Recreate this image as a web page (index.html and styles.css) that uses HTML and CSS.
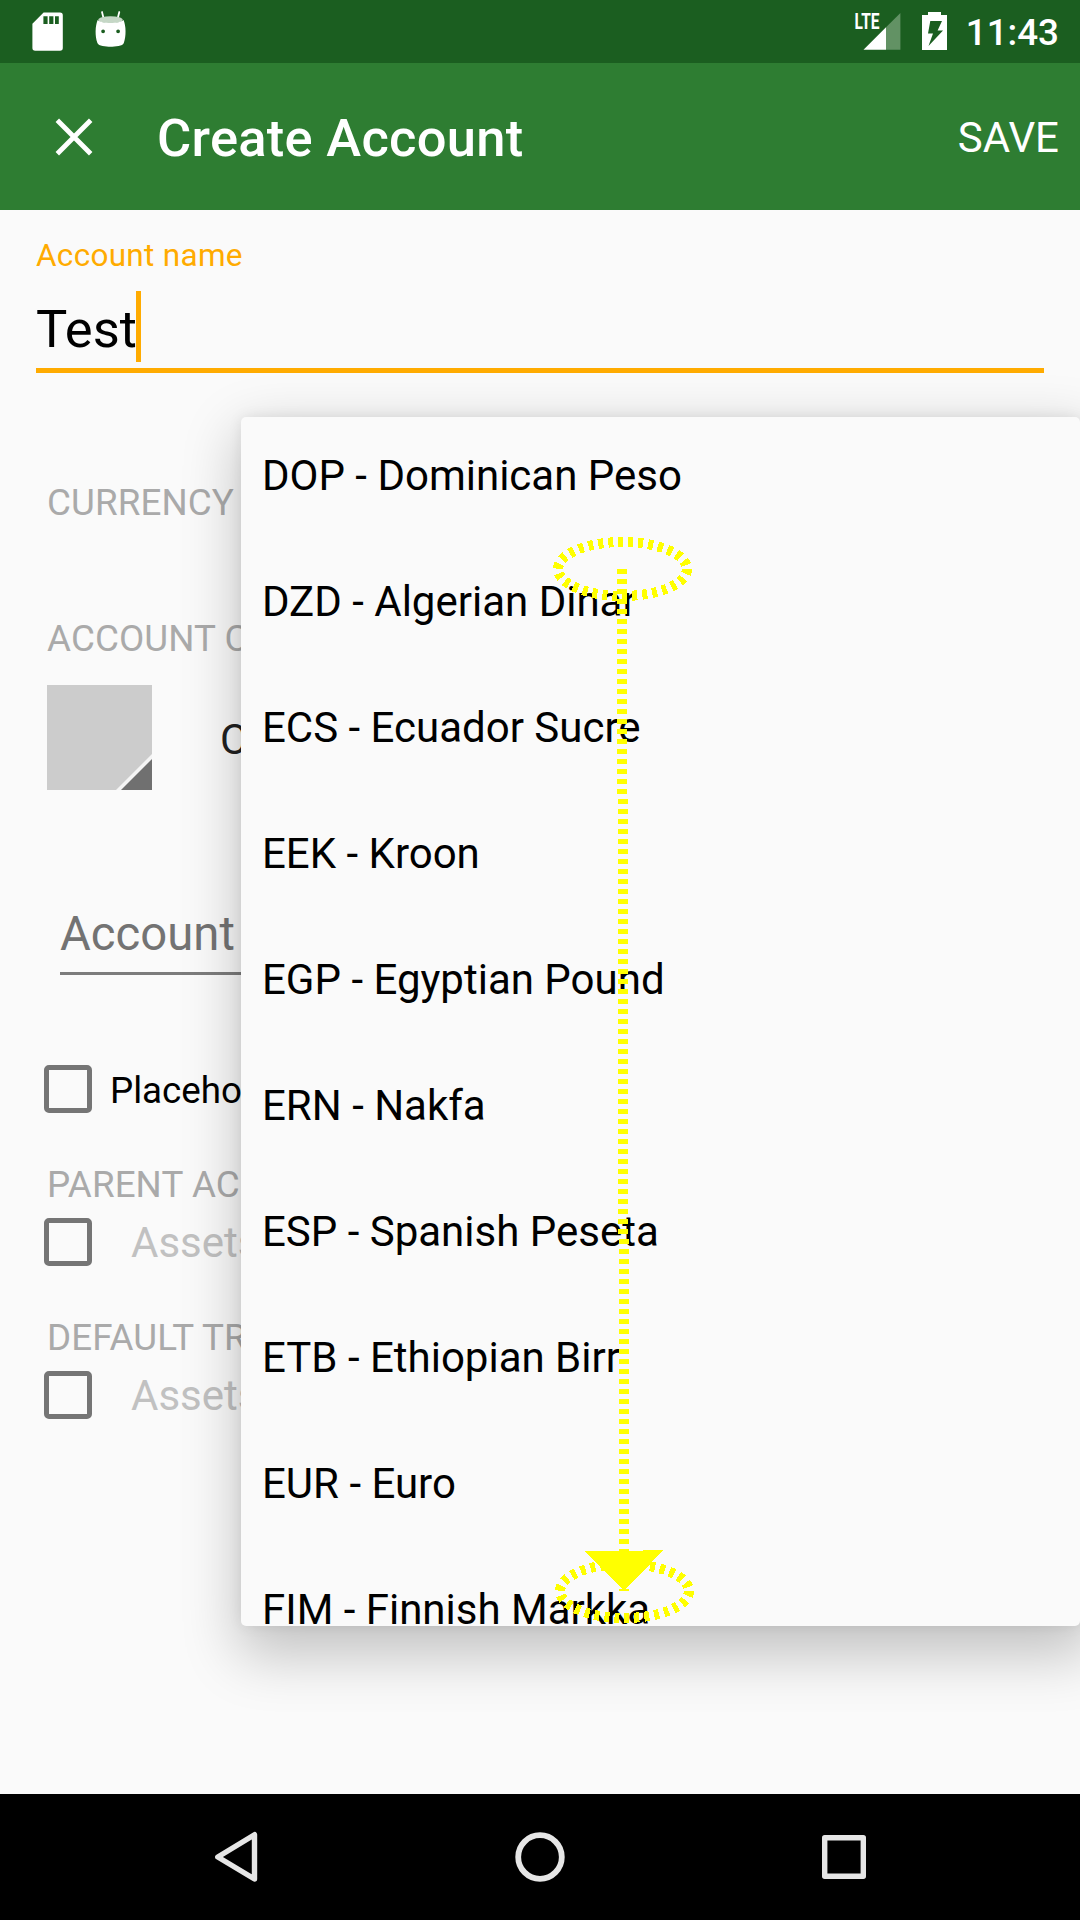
FILE: index.html
```html
<!DOCTYPE html>
<html lang="en">
<head>
<meta charset="utf-8">
<title>Create Account</title>
<link rel="stylesheet" href="styles.css">
</head>
<body>
<div class="screen">
  <header class="status-bar">
    <svg class="status-icons" width="140" height="63" viewBox="0 0 140 63">
      <path fill="#fff" fill-rule="evenodd" d="M43.6 12.4H60a2.8 2.8 0 0 1 2.8 2.8V48a2.8 2.8 0 0 1-2.8 2.8H35.2a2.8 2.8 0 0 1-2.8-2.8V23.8zM43.4 16.3V24h4.2v-7.7zM49.2 16.3V24h4.2v-7.7zM55 16.3V24h3.8v-7.7z"/>
      <path stroke="#fff" stroke-width="1.8" stroke-linecap="round" d="M102 12l1.6 6.5M119.300 12l-1.600 6.500"/>
      <ellipse cx="110.500" cy="19.800" rx="12.200" ry="3.600" fill="#c5d7c6"/>
      <path fill="#fff" fill-rule="evenodd" d="M97.600 20C102 24 119 24 123.600 20C126 26 126.400 36 123.800 43C123 46.200 115 46.700 110.500 46.700S98.400 46.200 97.400 43C94.800 36 95.200 26 97.600 20zM101.200 31.300a1.900 1.900 0 1 0 3.800 0a1.900 1.900 0 1 0-3.800 0zM116.200 31.300a1.900 1.900 0 1 0 3.800 0a1.900 1.900 0 1 0-3.800 0z"/>
    </svg>
    <div class="status-right">
      <svg width="112" height="63" viewBox="850 0 112 63">
        <path fill="#629264" d="M886 27.300L900.400 13V49.700H886z"/>
        <path fill="#fff" d="M863.500 49.700L886 27.300V49.700z"/>
        <text class="lte" x="854.500" y="29" textLength="25" lengthAdjust="spacingAndGlyphs">LTE</text>
        <path fill="#fff" fill-rule="evenodd" d="M922 15h6v-3h13v3h6v35h-25zM930.300 21L928 33.500h5L928.500 46L943 30.500h-5.400L942 21z"/>
      </svg>
      <span class="clock">11:43</span>
    </div>
  </header>

  <div class="toolbar">
    <svg class="close" width="38" height="38" viewBox="0 0 38 38"><path stroke="#fff" stroke-width="4.900" d="M2.300 2.300L35.700 35.700M35.700 2.300L2.300 35.700"/></svg>
    <h1 class="title">Create Account</h1>
    <span class="save">SAVE</span>
  </div>

  <main class="form">
    <div class="name-label">Account name</div>
    <div class="name-input"><span class="name-value">Test</span><span class="caret"></span></div>
    <div class="name-line"></div>

    <div class="fields">
      <div class="section currency">CURRENCY</div>
      <div class="section color">ACCOUNT COLOR</div>
      <div class="swatch-row">
        <svg width="105" height="105" viewBox="0 0 105 105">
          <path fill="#ccc" d="M0 0H105V105H0z"/>
          <path fill="#f5f5f5" d="M105 69V105H69z"/>
          <path fill="#707070" d="M105 74V105H74z"/>
        </svg>
        <span>Color</span>
      </div>
      <div class="description">Account description</div>
      <div class="check-row placeholder"><i class="box"></i><span>Placeholder account</span></div>
      <div class="section parent">PARENT ACCOUNT</div>
      <div class="check-row account"><i class="box"></i><span>Assets</span></div>
      <div class="section parent">DEFAULT TRANSFER ACCOUNT</div>
      <div class="check-row account"><i class="box"></i><span>Assets</span></div>
    </div>
  </main>

  <nav class="nav-bar">
    <svg width="1080" height="126" viewBox="0 1794 1080 126" fill="none" stroke="#e6e6e6" stroke-width="5.400" stroke-linejoin="round">
      <path d="M217.800 1857L254.500 1834.700V1879z"/>
      <circle cx="540" cy="1857" r="21.800" stroke-width="5.800"/>
      <rect x="824.700" y="1837.700" width="38.600" height="38.600"/>
    </svg>
  </nav>

  <div class="dropdown">
    <ul class="options">
      <li>DOP - Dominican Peso</li>
      <li>DZD - Algerian Dinar</li>
      <li>ECS - Ecuador Sucre</li>
      <li>EEK - Kroon</li>
      <li>EGP - Egyptian Pound</li>
      <li>ERN - Nakfa</li>
      <li>ESP - Spanish Peseta</li>
      <li>ETB - Ethiopian Birr</li>
      <li>EUR - Euro</li>
      <li>FIM - Finnish Markka</li>
    </ul>
  </div>

  <svg class="gesture" width="150" height="1100" viewBox="550 530 150 1100" fill="none" stroke="#ff0" stroke-width="10" stroke-dasharray="5" shape-rendering="crispEdges">
    <ellipse cx="622.500" cy="569" rx="64.500" ry="27"/>
    <path d="M622 569L624.300 1590"/>
    <ellipse cx="624.500" cy="1591" rx="64.500" ry="27"/>
    <path fill="#ff0" stroke="none" d="M584 1551H643V1550H663.500L626 1589H629V1591H619V1589H622z"/>
  </svg>
</div>
</body>
</html>
```
FILE: styles.css
```css
* { box-sizing: border-box; }

body {
  margin: 0;
  background: #fafafa;
  color: #000;
  font-family: Roboto, sans-serif;
}

.screen {
  position: relative;
  display: flex;
  flex-direction: column;
  width: 1080px;
  height: 1920px;
  overflow: hidden;
}

svg { display: block; flex: none; }

.status-bar {
  display: flex;
  justify-content: space-between;
  height: 63px;
  background: #1b5e20;
  color: #fff;
}

.status-right { display: flex; padding-right: 21px; gap: 4px; }
.lte { fill: #fff; font-size: 22px; font-weight: 700; }
.clock { font-size: 36.75px; font-weight: 500; line-height: 66px; }

.toolbar {
  display: flex;
  align-items: center;
  height: 147px;
  padding: 0 21px 0 55px;
  background: #2e7d32;
  color: #fff;
}

.title {
  flex: 1;
  margin: 0 0 0 64px;
  padding-top: 3px;
  font-size: 52.5px;
  font-weight: 500;
  letter-spacing: .27px;
}

.save { padding-top: 2px; font-size: 42px; }

.form { flex: 1; padding: 26px 36px 0; white-space: nowrap; }
.name-label { color: #ffab00; font-size: 31.5px; line-height: 40px; letter-spacing: .3px; }
.name-input { display: flex; height: 71px; margin-top: 15px; }
.name-value { width: 100px; font-size: 52.5px; line-height: 76px; }
.caret { width: 5px; background: #ffab00; }
.name-line { height: 5px; margin-top: 6px; background: #ffab00; }

.fields { padding-left: 11px; }
.section { color: #aaa; font-size: 36.75px; line-height: 44px; letter-spacing: .1px; }
.currency { margin-top: 108px; }
.color { margin-top: 92px; }
.parent { margin-top: 50px; }

.swatch-row {
  display: flex;
  gap: 68px;
  height: 105px;
  margin-top: 24px;
  color: #212121;
  font-size: 42px;
  line-height: 109px;
}

.description {
  height: 71px;
  margin: 114px 0 0 13px;
  border-bottom: 3px solid #7c7c7c;
  color: #737373;
  font-size: 47.25px;
  line-height: 61px;
}

.check-row {
  display: flex;
  height: 48px;
  margin: 11px 0 0 -3px;
  font-size: 36.75px;
  line-height: 52px;
}

.box {
  width: 48px;
  height: 48px;
  border: 5px solid #757575;
  border-radius: 5px;
}

.placeholder { gap: 18px; margin-top: 90px; }
.account { gap: 39px; color: #c1c1c1; font-size: 42px; line-height: 49px; }

.nav-bar { height: 126px; background: #000; }

.dropdown {
  position: absolute;
  top: 417px;
  left: 241px;
  width: 839px;
  height: 1209px;
  overflow: hidden;
  border-radius: 5px;
  background: #fafafa;
  box-shadow: 5px 22px 56px 8px rgba(0, 0, 0, .22), 0 0 14px rgba(0, 0, 0, .08);
}

.options {
  margin: -4px 0 0;
  padding: 0 21px;
  list-style: none;
  font-size: 42px;
  line-height: 126px;
}

.gesture { position: absolute; top: 530px; left: 550px; }
```
